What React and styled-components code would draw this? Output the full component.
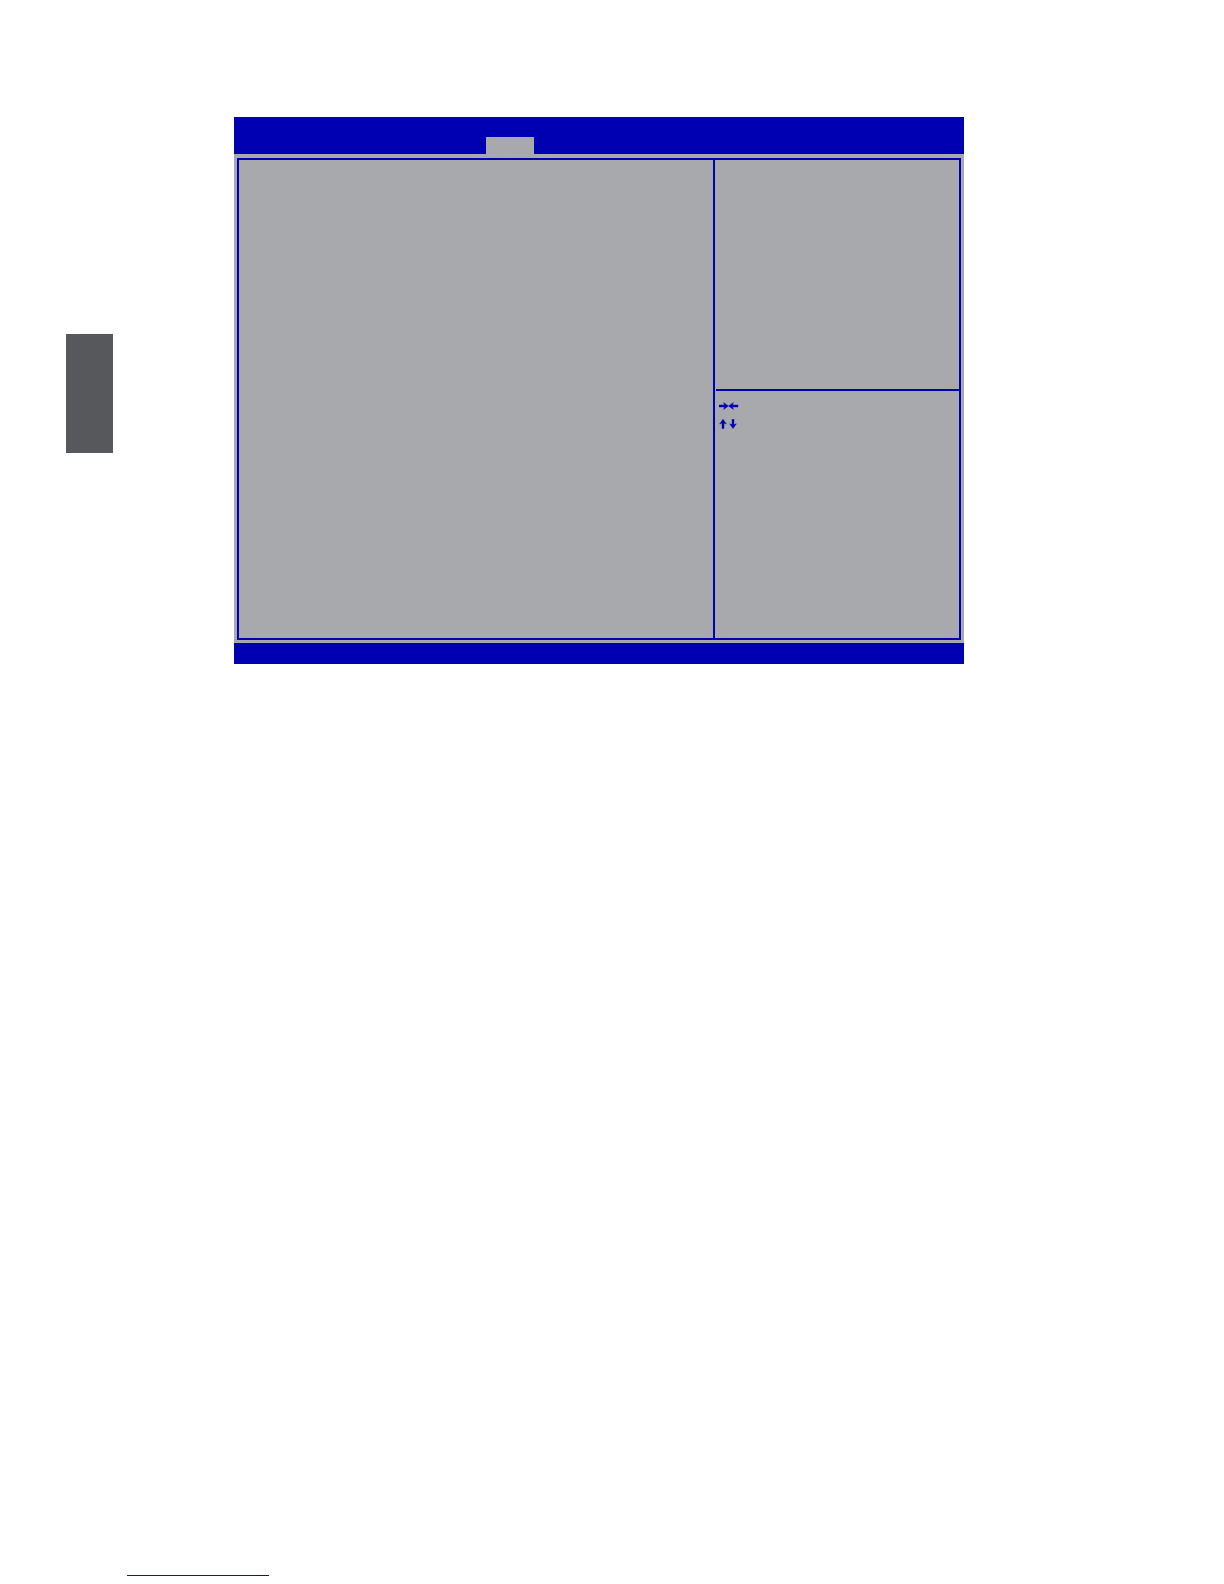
import React from 'react';
import styled, { createGlobalStyle, ThemeProvider } from 'styled-components';

const theme = {
  blue: '#0000b3',
  grey: '#a7a9ac',
  slate: '#56585b',
  link: '#1010a0',
};

const GlobalStyle = createGlobalStyle`
  *, *::before, *::after { box-sizing: border-box; }
  body {
    margin: 0;
    background: #fff;
    font-family: "Liberation Sans", Arial, sans-serif;
  }
`;

const Page = styled.div`
  display: flex;
  flex-direction: column;
  justify-content: space-between;
  min-height: 100vh;
  padding: 117px 260px 8px 66px;
`;

const Content = styled.main`
  display: flex;
  align-items: flex-start;
  gap: 121px;
`;

const ChapterMarker = styled.aside`
  flex: none;
  width: 47px;
  height: 119px;
  margin-top: 217px;
  background: ${({ theme }) => theme.slate};
`;

const Screen = styled.section`
  flex: 1;
  min-width: 0;
  background: ${({ theme }) => theme.grey};
`;

const MenuBar = styled.header`
  display: flex;
  align-items: flex-end;
  height: 37px;
  padding-left: 252px;
  background: ${({ theme }) => theme.blue};
`;

const MenuTab = styled.button`
  width: 48px;
  height: 17px;
  padding: 0;
  border: 0;
  background: ${({ theme }) => theme.grey};
`;

const Body = styled.div`
  padding: 4px 3px 3px;
`;

const Frame = styled.div`
  display: grid;
  grid-template-columns: minmax(0, 1fr) 246px;
  min-height: 482px;
  border: 2px solid ${({ theme }) => theme.blue};
`;

const Settings = styled.div`
  min-width: 0;
`;

const HelpColumn = styled.div`
  display: grid;
  grid-template-rows: 229px 1fr;
  padding-left: 1px;
  border-left: 2px solid ${({ theme }) => theme.blue};
`;

const ItemHelp = styled.div`
  min-width: 0;
`;

const KeyLegend = styled.div`
  display: flex;
  flex-direction: column;
  gap: 6px;
  padding: 10px 3px;
  border-top: 2px solid ${({ theme }) => theme.blue};
`;

const KeyIcon = styled.svg`
  display: block;
  width: 20px;
  height: 12px;
  fill: ${({ theme }) => theme.blue};
  stroke: ${({ theme }) => theme.blue};
  stroke-width: 0.4;
`;

const StatusBar = styled.footer`
  height: 21px;
  background: ${({ theme }) => theme.blue};
`;

const PageRule = styled.hr`
  width: 142px;
  height: 1px;
  margin: 0 0 0 61px;
  border: 0;
  background: ${({ theme }) => theme.link};
`;

export default function App() {
  return (
    <ThemeProvider theme={theme}>
      <GlobalStyle />
      <Page>
        <Content>
          <ChapterMarker />
          <Screen>
            <MenuBar>
              <MenuTab type="button" aria-label="Current menu" />
            </MenuBar>
            <Body>
              <Frame>
                <Settings />
                <HelpColumn>
                  <ItemHelp />
                  <KeyLegend>
                    <KeyIcon viewBox="0 0 20 12" role="img" aria-label="Right and left arrow keys">
                      <path d="M0 4h5.4L4.6 1.6 9.4 5 4.6 8.4 5.4 6H0zM19 4h-5.4l.8-2.4L9.6 5l4.8 3.4-.8-2.4H19z" />
                    </KeyIcon>
                    <KeyIcon viewBox="0 0 20 12" role="img" aria-label="Up and down arrow keys">
                      <path d="M3 9.6V4.2L.6 5 4 .2 7.4 5 5 4.2V9.6zM13 .2V5.6l-2.4-.8L14 9.6l3.4-4.8L15 5.6V.2z" />
                    </KeyIcon>
                  </KeyLegend>
                </HelpColumn>
              </Frame>
            </Body>
            <StatusBar />
          </Screen>
        </Content>
        <PageRule />
      </Page>
    </ThemeProvider>
  );
}
